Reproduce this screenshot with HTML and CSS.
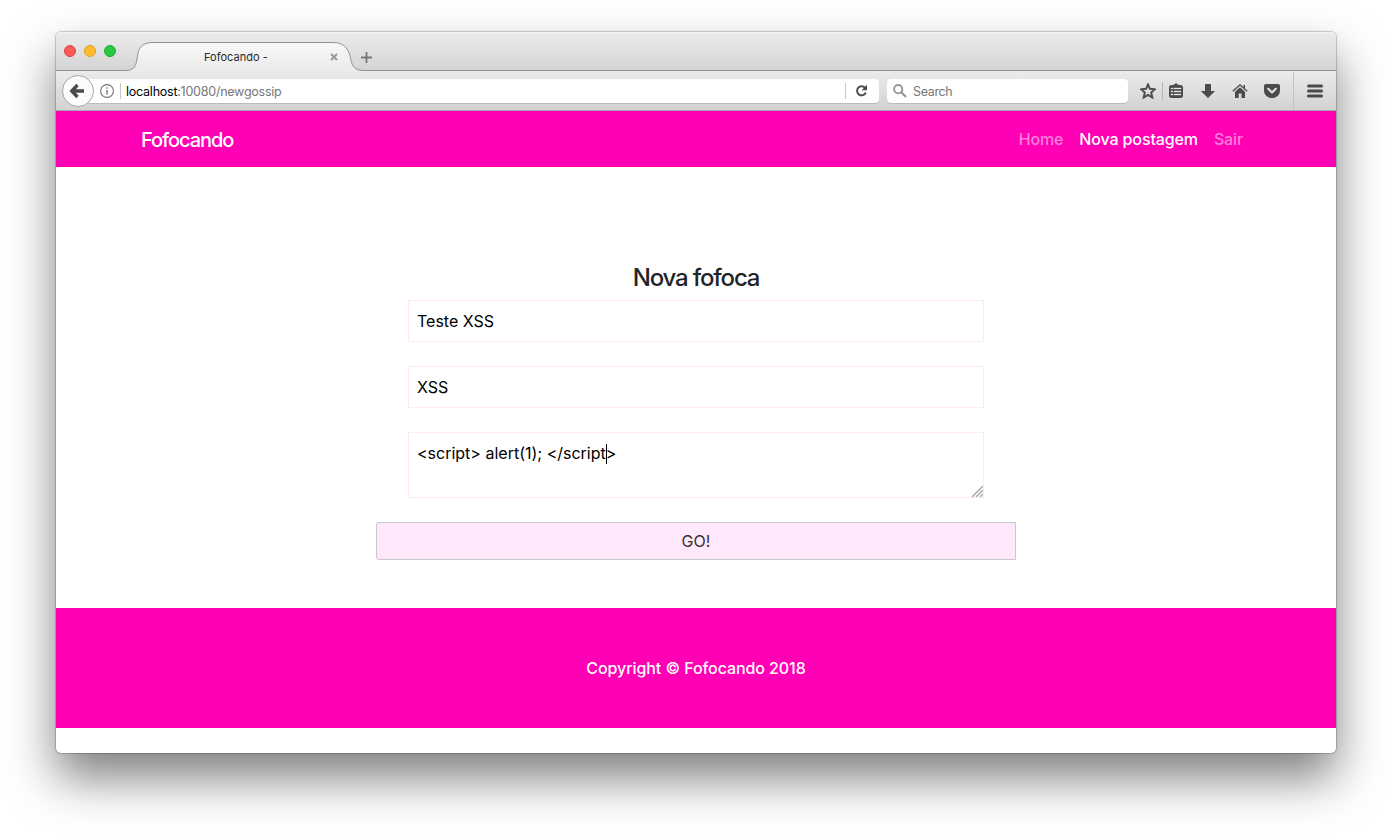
FILE: index.html
```
<!DOCTYPE html>
<html lang="pt-BR">
<head>
<meta charset="utf-8">
<title>Fofocando -</title>
<link rel="stylesheet" href="styles.css">
</head>
<body>
<div class="window">
  <header class="titlebar">
    <svg class="tab-shape" width="1280" height="39" viewBox="0 0 1280 39">
      <defs><linearGradient id="tabFill" x1="0" y1="0" x2="0" y2="1"><stop offset="0" stop-color="#f8f8f8"/><stop offset="1" stop-color="#ebebeb"/></linearGradient></defs>
      <path d="M70 39C84 39 79 24 84 16Q88 10.500 96 10.500H277Q287 10.500 291 17C297 26 292 39 308 39Z" fill="url(#tabFill)"/>
      <path d="M0 38.500H70C84 38.500 79 24 84 16Q88 10.500 96 10.500H277Q287 10.500 291 17C297 26 292 38.500 308 38.500H1280" fill="none" stroke="#929292"/>
    </svg>
    <div class="lights"><i class="red"></i><i class="yellow"></i><i class="green"></i></div>
    <div class="tab">
      <span class="tab-title">Fofocando -</span>
      <svg class="tab-close" width="8" height="8" viewBox="0 0 8 8"><path d="M1 1L7 7M7 1L1 7" stroke="#999" stroke-width="2"/></svg>
    </div>
    <svg class="plus" width="11" height="11" viewBox="0 0 11 11"><path d="M5.500 0V11M0 5.500H11" stroke="#777" stroke-width="1.800"/></svg>
  </header>

  <div class="toolbar">
    <div class="back"><svg width="16" height="16" viewBox="0 0 16 16"><path d="M8.500 2L2.800 8L8.500 14M3 8H15" fill="none" stroke="#4b4b4b" stroke-width="3.400"/></svg></div>
    <div class="address">
      <svg width="14" height="14" viewBox="0 0 14 14"><circle cx="7" cy="7" r="6.400" fill="none" stroke="#737373" stroke-width="1.100"/><path d="M7 6V10.500M7 3.200V4.700" stroke="#737373" stroke-width="1.400"/></svg>
      <i class="rule"></i>
      <span class="url"><b>localhost</b>:10080/newgossip</span>
      <i class="rule reload-rule"></i>
      <svg class="reload" width="13" height="13" viewBox="0 0 13 13"><path d="M10 3.900A4.500 4.500 0 1 0 10.700 8.600" fill="none" stroke="#4b4b4b" stroke-width="2"/><path d="M12 0.800V6.200H6.600Z" fill="#4b4b4b"/></svg>
    </div>
    <div class="search">
      <svg width="14" height="14" viewBox="0 0 14 14"><circle cx="5.200" cy="5.200" r="4.100" fill="none" stroke="#999" stroke-width="2"/><path d="M8.200 8.200L13 13" stroke="#999" stroke-width="2.300"/></svg>
      <span>Search</span>
    </div>
    <div class="tools">
      <svg class="star" width="16" height="16" viewBox="0 0 16 16"><path d="M8 1.400L9.900 5.800L14.900 6.300L11.200 9.600L12.300 14.500L8 11.900L3.700 14.500L4.800 9.600L1.100 6.300L6.100 5.800Z" fill="none" stroke="#4b4b4b" stroke-width="1.900"/></svg>
      <i class="rule short"></i>
      <svg class="list" width="16" height="16" viewBox="0 0 16 16"><path d="M3.500 2H5.500L8 0L10.500 2H12.500Q15 2 15 4.500V12.500Q15 15 12.500 15H3.500Q1 15 1 12.500V4.500Q1 2 3.500 2Z" fill="#4b4b4b"/><path d="M3 5H5V6H3ZM3 8H5V9H3ZM3 11H5V12H3ZM6 5H13V6H6ZM6 8H13V9H6ZM6 11H13V12H6Z" fill="#e6e6e6" stroke="#e6e6e6" stroke-width=".35"/></svg>
      <svg class="down" width="16" height="16" viewBox="0 0 16 16"><path d="M5 2Q5 1 6 1H10Q11 1 11 2V8H15L8 15L1 8H5Z" fill="#4b4b4b"/></svg>
      <svg class="home" width="16" height="16" viewBox="0 0 16 16"><path d="M0.800 8.200L8 1.800L15.200 8.200" fill="none" stroke="#4b4b4b" stroke-width="1.300"/><path d="M8 4.200L13 8.700V15H9.500V10.500H6.700V15H3V8.700ZM11.500 2H13V5H11.500Z" fill="#4b4b4b"/></svg>
      <svg class="pocket" width="16" height="16" viewBox="0 0 16 16"><path d="M2 1H14Q16 1 16 3V7.200C16 12 12.500 15 8 15S0 12 0 7.200V3Q0 1 2 1Z" fill="#4b4b4b"/><path d="M4.200 5.800L8 9.500L11.800 5.800" fill="none" stroke="#e6e6e6" stroke-width="2" stroke-linecap="round" stroke-linejoin="round"/></svg>
      <i class="rule tall"></i>
      <svg class="menu" width="16" height="14" viewBox="0 0 16 14"><path d="M1.500 2H14.500M1.500 7H14.500M1.500 12H14.500" stroke="#4b4b4b" stroke-width="3" stroke-linecap="round"/></svg>
    </div>
  </div>

  <nav class="navbar">
    <span class="brand">Fofocando</span>
    <div class="links"><span class="home-link">Home</span><span class="active">Nova postagem</span><span class="exit">Sair</span></div>
  </nav>
  <main class="content">
    <h1>Nova fofoca</h1>
    <div class="field"><span>Teste XSS</span></div>
    <div class="field"><span>XSS</span></div>
    <div class="field area"><span>&lt;script&gt; alert(1); &lt;/script<i class="caret"></i>&gt;</span>
      <svg class="grip" width="12" height="12" viewBox="0 0 12 12"><path d="M1 12L12 1M5 12L12 5M9 12L12 9" stroke="#aaa" stroke-width="1.500"/></svg>
    </div>
    <div class="go"><span>GO!</span></div>
  </main>
  <footer class="footer"><span>Copyright © Fofocando 2018</span></footer>
</div>
</body>
</html>
```
FILE: styles.css
```
* { box-sizing: border-box; }
body { margin: 0; height: 833px; overflow: hidden; background: #fff; font-family: Inter, "Liberation Sans", sans-serif; }
svg { display: block; flex: none; }
span { white-space: nowrap; }
.window { width: 1280px; height: 721px; margin: 32px 56px 0; border-radius: 5px; background: #fff; overflow: hidden; box-shadow: 0 0 1px 1px rgba(0,0,0,.2), 0 25px 48px rgba(0,0,0,.5); }

.titlebar { position: relative; display: flex; height: 39px; background: linear-gradient(#ececec, #d3d3d3); box-shadow: inset 0 1px #f3f3f3; }
.tab-shape { position: absolute; left: 0; top: 0; }
.lights { position: relative; display: flex; gap: 8px; padding: 13px 0 0 8px; width: 148px; }
.lights i { width: 12px; height: 12px; border-radius: 50%; border: 1px solid; }
.lights .red { background: #fc5b57; border-color: #df4744; }
.lights .yellow { background: #fdbc2e; border-color: #dfa023; }
.lights .green { background: #28c940; border-color: #1fad2c; }
.tab { position: relative; display: flex; align-items: center; width: 134px; height: 28px; margin-top: 11px; font-size: 11px; color: #2a2a2a; }
.tab-title { letter-spacing: .02px; }
.tab-close { margin-left: auto; }
.plus { position: relative; margin: 20px 0 0 23px; }

.toolbar { display: flex; align-items: center; height: 40px; padding-left: 6px; border-bottom: 1px solid #aaa; background: linear-gradient(#ebebeb, #d2d2d2); }
.back { position: relative; z-index: 1; display: flex; align-items: center; justify-content: center; width: 32px; height: 32px; padding-right: 2px; border: 1px solid #a6a6a6; border-radius: 50%; background: #fbfbfb; }
.address { display: flex; align-items: center; width: 790px; height: 24px; margin-left: -5px; padding-left: 11px; border-radius: 0 4px 4px 0; background: #fff; box-shadow: 0 1px #bbb; }
.rule { display: block; flex: none; width: 1px; height: 16px; background: #c8c8c8; }
.address .rule { margin: 0 5px 0 6px; }
.url { padding-top: 2px; font-size: 12.500px; letter-spacing: -.24px; color: #777; }
.url b { font-weight: 400; color: #000; }
.address .reload-rule { margin: 0 9px 0 auto; }
.reload { margin-right: 11px; }
.search { display: flex; gap: 6px; align-items: center; width: 241px; height: 24px; margin-left: 8px; padding-left: 6px; border-radius: 4px; background: #fff; box-shadow: 0 1px #bbb; font-size: 12.500px; letter-spacing: -.35px; color: #777; }
.search span { padding-top: 2px; }
.tools { display: flex; align-items: center; height: 39px; margin-left: 12px; }
.short { height: 18px; margin: 0 5px 0 6px; background: #b5b5b5; }
.down, .home, .pocket { margin-left: 16px; }
.tall { height: 38px; margin: 0 13px; background: #c3c3c3; }

.navbar { display: flex; align-items: center; justify-content: space-between; height: 56px; padding: 0 93px 0 85px; background: #ff00b4; color: #fff; }
.brand { padding-top: 2px; font-size: 20px; font-weight: 500; letter-spacing: -1.05px; }
.links { display: flex; gap: 16px; font-size: 16px; font-weight: 500; letter-spacing: -.13px; color: rgba(255,255,255,.5); }
.active { color: #fff; }

.content { display: flex; flex-direction: column; align-items: center; height: 441px; padding-top: 96px; color: #000; }
h1 { margin: 0 0 8px; font-size: 24px; line-height: 29px; font-weight: 500; color: #212529; letter-spacing: -1.17px; }
.field { position: relative; width: 576px; height: 42px; margin-bottom: 24px; padding: 8px; border: 1px solid #ffe8fb; font-size: 16px; line-height: 25px; }
.area { height: 66px; }
.caret { display: inline-block; width: 1px; height: 20px; margin-right: -1px; vertical-align: -5px; background: #000; }
.grip { position: absolute; right: 0; bottom: 0; }
.go { display: flex; align-items: center; justify-content: center; width: 640px; height: 38px; border: 1px solid #c8c8c8; border-radius: 3px 0 0 3px; background: #ffe8fb; font-size: 16px; color: #333; }
.footer { display: flex; align-items: center; justify-content: center; height: 120px; background: #ff00b4; color: #fff; font-size: 16px; font-weight: 500; letter-spacing: -.08px; }
```
